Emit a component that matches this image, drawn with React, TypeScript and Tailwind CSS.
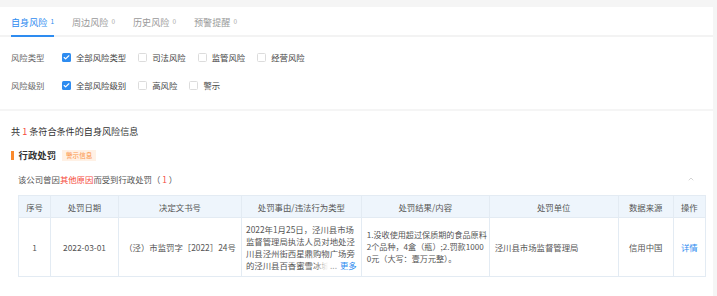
import { Check, ChevronUp } from "lucide-react";

const font = { fontFamily: '"Noto Sans CJK SC", "Noto Sans", sans-serif' };

function Box({ checked, label }: { checked?: boolean; label: string }) {
  return (
    <div className="flex items-center gap-[5px] mr-[12px]">
      {checked ? (
        <span className="w-[9px] h-[9px] rounded-[1.5px] bg-[#2e8cf0] flex items-center justify-center">
          <Check size={7} strokeWidth={4} className="text-white" />
        </span>
      ) : (
        <span className="w-[9px] h-[9px] rounded-[1.5px] border border-[#dcdcdc] bg-white" />
      )}
      <span className="text-[8.4px] leading-[12px] text-[#444]">{label}</span>
    </div>
  );
}

const tabs = [
  { name: "自身风险", count: 1, active: true },
  { name: "周边风险", count: 0 },
  { name: "历史风险", count: 0 },
  { name: "预警提醒", count: 0 },
];

const cols = [
  { title: "序号", w: "w-[32px]" },
  { title: "处罚日期", w: "w-[68px]" },
  { title: "决定文书号", w: "w-[123px]" },
  { title: "处罚事由/违法行为类型", w: "w-[119px]" },
  { title: "处罚结果/内容", w: "w-[128px]" },
  { title: "处罚单位", w: "w-[129px]" },
  { title: "数据来源", w: "w-[55px]" },
  { title: "操作", w: "w-[32px]" },
];

const result = ["1.没收使用超过保质期的食品原料", "2个品种，4盒（瓶）;2.罚款1000", "0元（大写：壹万元整）。"];

export default function App() {
  return (
    <div className="w-[717px] h-[296px] overflow-hidden bg-[#f5f5f5] pt-[7px]" style={font}>
      <div className="w-[713px] bg-white h-[102px]">
        <div className="h-[30px] flex items-end gap-[18px] px-[11px] border-b-2 border-[#f3f3f3]">
          {tabs.map((t) => (
            <div
              key={t.name}
              className={
                "h-full flex items-center gap-[3px] border-b-2 -mb-[2px] " +
                (t.active ? "border-[#2e8cf0]" : "border-transparent")
              }
            >
              <span className={"text-[9.1px] leading-[12px] " + (t.active ? "text-[#2e8cf0]" : "text-[#999]")}>
                {t.name}
              </span>
              <span className={"text-[6.5px] " + (t.active ? "text-[#2e8cf0]" : "text-[#aaa]")}>{t.count}</span>
            </div>
          ))}
        </div>
        <div className="px-[11px] pt-[12px] flex flex-col gap-[12px]">
          <div className="flex items-center h-[16px]">
            <span className="w-[51px] text-[8.4px] text-[#666]">风险类型</span>
            <Box checked label="全部风险类型" />
            <Box label="司法风险" />
            <Box label="监管风险" />
            <Box label="经营风险" />
          </div>
          <div className="flex items-center h-[16px]">
            <span className="w-[51px] text-[8.4px] text-[#666]">风险级别</span>
            <Box checked label="全部风险级别" />
            <Box label="高风险" />
            <Box label="警示" />
          </div>
        </div>
      </div>

      <div className="w-[713px] bg-white mt-[2px] h-[200px] pt-[14px]">
        <div className="px-[11px] text-[9.1px] leading-[12px] text-[#333]">
          共 <span className="text-[#f5483b]">1</span> 条符合条件的自身风险信息
        </div>
        <div className="flex items-center px-[11px] mt-[12px] h-[12px]">
          <span className="w-[2.5px] h-[9px] bg-[#fa8a2c] mr-[5px]" />
          <span className="text-[9.4px] font-bold text-[#333] leading-[12px]">行政处罚</span>
          <span className="ml-[6px] h-[11px] px-[4px] flex items-center bg-[#fff1e5] text-[#fb9447] text-[6.6px] leading-none">
            警示信息
          </span>
        </div>
        <div className="flex items-center justify-between pl-[18px] pr-[18px] mt-[12px] h-[12px]">
          <span className="text-[8.4px] text-[#555] leading-[12px]">
            该公司曾因<span className="text-[#f5483b]">其他原因</span>而受到行政处罚（ <span className="text-[#f5483b]">1</span> ）
          </span>
          <ChevronUp size={8} strokeWidth={1.5} className="text-[#aaa]" />
        </div>

        <table className="ml-[18px] mt-[10px] table-fixed border-collapse text-[8.4px] text-[#555]">
          <thead>
            <tr className="bg-[#eef5fc] h-[22px]">
              {cols.map((c) => (
                <th key={c.title} className={c.w + " border border-[#e3ebf3] font-normal text-center text-[#555] leading-[12px]"}>
                  {c.title}
                </th>
              ))}
            </tr>
          </thead>
          <tbody>
            <tr className="h-[59px]">
              <td className="border border-[#e3ebf3] text-center">1</td>
              <td className="border border-[#e3ebf3] text-center">2022-03-01</td>
              <td className="border border-[#e3ebf3] text-center">（泾）市监罚字［2022］24号</td>
              <td className="border border-[#e3ebf3] px-[4px] align-middle">
                <div className="leading-[12px] break-all">
                  2022年1月25日，泾川县市场监督管理局执法人员对地处泾川县泾州街西星鼎购物广场旁
                </div>
                <div className="flex items-center leading-[12px] h-[12px] whitespace-nowrap">
                  <span className="relative overflow-hidden w-[82px] shrink-0">
                    的泾川县百香蜜雪冰城
                    <span className="absolute right-0 top-0 h-full w-[14px] bg-gradient-to-r from-transparent to-white" />
                  </span>
                  <span className="ml-[2px] shrink-0 text-[#aaa]">...</span>
                  <span className="ml-[3px] shrink-0 text-[#2e8cf0]">更多</span>
                </div>
              </td>
              <td className="border border-[#e3ebf3] pl-[5px] leading-[12px] text-[8.1px]">
                {result.map((l) => (
                  <div key={l} className="whitespace-nowrap">
                    {l}
                  </div>
                ))}
              </td>
              <td className="border border-[#e3ebf3] px-[5px]">泾川县市场监督管理局</td>
              <td className="border border-[#e3ebf3] text-center">信用中国</td>
              <td className="border border-[#e3ebf3] text-center text-[#2e8cf0]">详情</td>
            </tr>
          </tbody>
        </table>
      </div>
    </div>
  );
}
